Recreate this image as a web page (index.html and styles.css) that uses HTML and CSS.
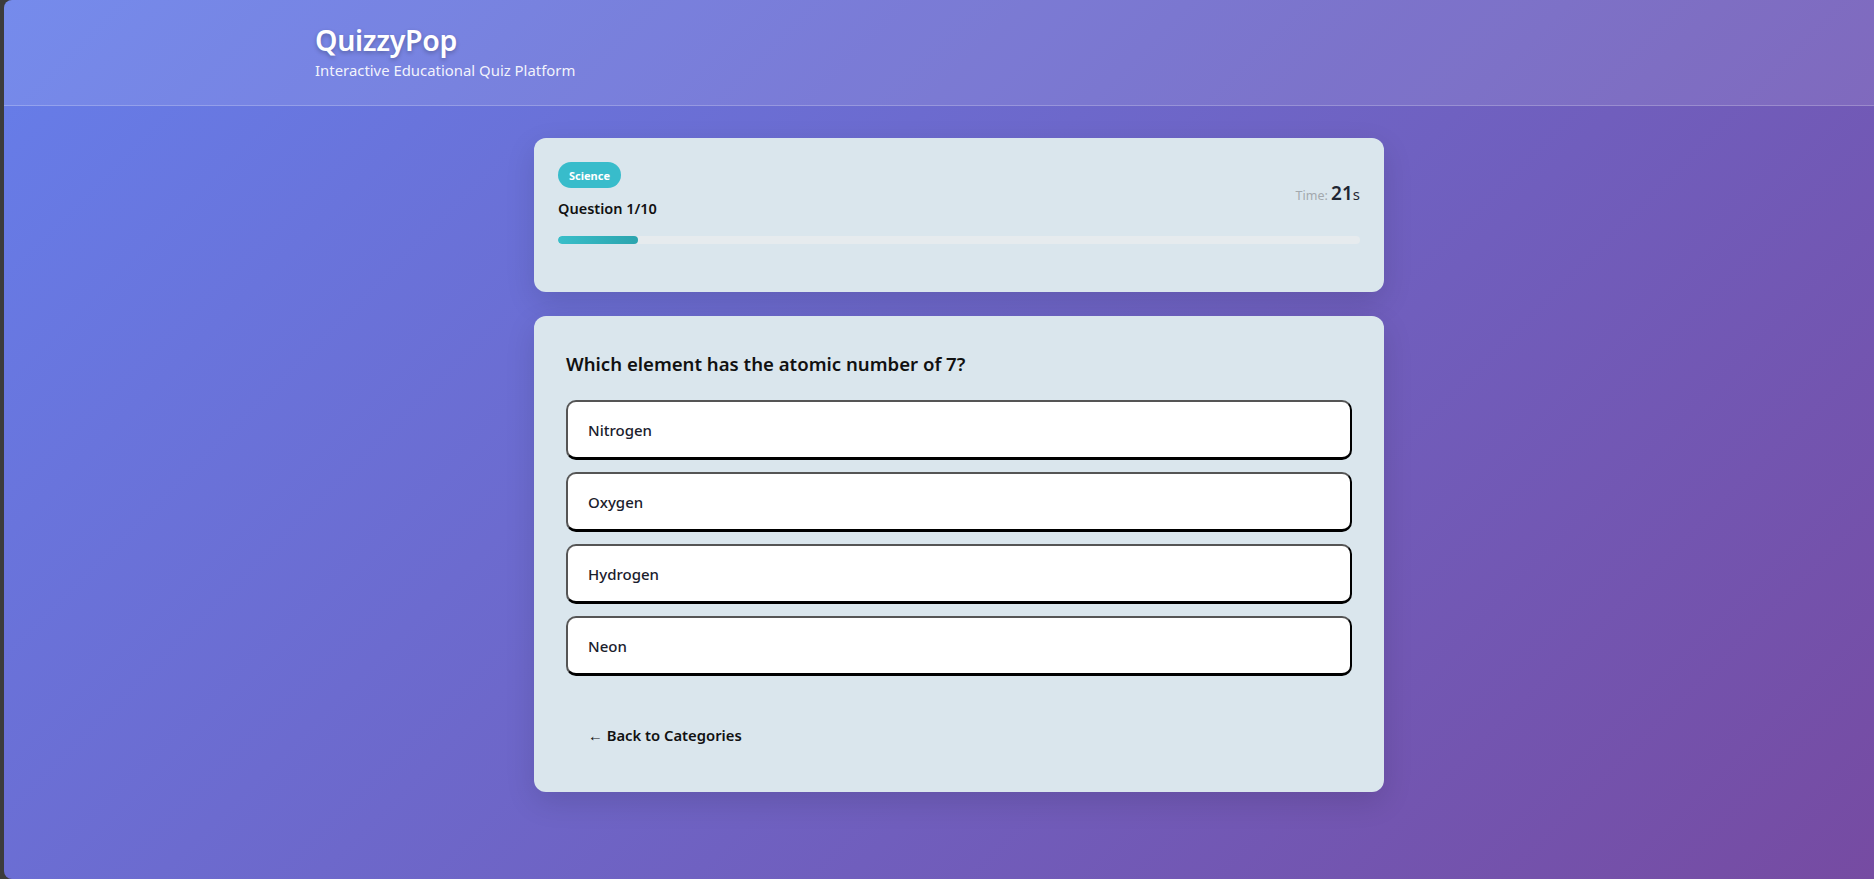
FILE: index.html
```html
<!DOCTYPE html>
<html lang="en">
<head>
<meta charset="utf-8">
<title>QuizzyPop</title>
<link rel="stylesheet" href="styles.css">
</head>
<body>
<div class="app">
  <header class="site-header">
    <div class="header-inner">
      <h1 class="brand">QuizzyPop</h1>
      <p class="tagline">Interactive Educational Quiz Platform</p>
    </div>
  </header>
  <main class="main">
    <section class="card status-card">
      <div class="status-row">
        <div class="status-left">
          <span class="badge">Science</span>
          <div class="q-count">Question 1/10</div>
        </div>
        <div class="timer"><span class="timer-label">Time:</span> <span class="timer-value">21</span><span class="timer-unit">s</span></div>
      </div>
      <div class="progress"><div class="progress-fill" style="width:10%"></div></div>
    </section>
    <section class="card question-card">
      <h2 class="question">Which element has the atomic number of 7?</h2>
      <div class="options">
        <button class="option">Nitrogen</button>
        <button class="option">Oxygen</button>
        <button class="option">Hydrogen</button>
        <button class="option">Neon</button>
      </div>
      <button class="back-btn">← Back to Categories</button>
    </section>
  </main>
</div>
</body>
</html>
```

FILE: styles.css
```css
* { box-sizing: border-box; }
html, body { margin: 0; padding: 0; height: 100%; }
body {
  background: #3c3c3c;
  font-family: "Noto Sans", "Open Sans", sans-serif;
  color: #1a1a1a;
  padding-left: 4px;
}
.app {
  height: 879px;
  overflow: hidden;
  border-radius: 8px 0 0 8px;
  background: linear-gradient(135deg, #667eea 0%, #764ba2 100%);
}
.site-header {
  background: rgba(255, 255, 255, 0.1);
  border-bottom: 1px solid rgba(255, 255, 255, 0.22);
  height: 106px;
  padding: 22px 0 0 311px;
}
.brand {
  margin: 0;
  color: #fff;
  font-size: 28.5px;
  font-weight: 600;
  line-height: 36px;
  letter-spacing: -0.3px;
  text-shadow: 0 2px 4px rgba(0, 0, 0, 0.25);
}
.tagline {
  margin: 1px 0 0;
  color: rgba(255, 255, 255, 0.92);
  font-size: 14.9px;
  line-height: 22px;
}
.main {
  width: 850px;
  margin: 32px 0 0 530px;
}
.card {
  background: #dae6ed;
  border-radius: 12px;
  box-shadow: 0 10px 30px rgba(0, 0, 0, 0.12);
}
.status-card {
  padding: 24px 24px 48px;
}
.status-row {
  display: flex;
  justify-content: space-between;
  align-items: center;
}
.status-left {
  display: flex;
  flex-direction: column;
  align-items: flex-start;
  gap: 8px;
}
.badge {
  display: inline-flex;
  align-items: center;
  height: 26px;
  padding: 0 11px;
  border-radius: 13px;
  background: #38bccb;
  color: #fff;
  font-size: 11px;
  font-weight: 700;
}
.q-count {
  font-size: 14.5px;
  font-weight: 600;
  line-height: 24px;
  color: #111;
}
.timer {
  color: #a3a9ae;
  font-size: 12.5px;
  margin-top: 3px;
}
.timer-value {
  color: #1f2733;
  font-size: 19px;
  font-weight: 600;
}
.timer-unit {
  color: #1f2733;
  font-size: 15px;
}
.progress {
  margin-top: 16px;
  height: 8px;
  border-radius: 4px;
  background: #e6ebee;
  overflow: hidden;
}
.progress-fill {
  height: 100%;
  border-radius: 4px;
  background: linear-gradient(90deg, #38bec9, #2ba4ae);
}
.question-card {
  margin-top: 24px;
  padding: 34px 32px 34px;
}
.question {
  margin: 0 0 23px;
  font-size: 18.6px;
  font-weight: 600;
  line-height: 27px;
  color: #111;
}
.options {
  display: flex;
  flex-direction: column;
  gap: 12px;
}
.option {
  display: block;
  width: 100%;
  height: 60px;
  padding: 0 20px;
  text-align: left;
  background: #fff;
  border: 2px solid;
  border-color: #555 #000 #000 #555;
  border-bottom-width: 3px;
  border-radius: 10px;
  font-family: inherit;
  font-size: 15px;
  font-weight: 500;
  color: #1a202c;
}
.back-btn {
  display: block;
  margin-top: 36px;
  height: 46px;
  padding: 0 22px;
  background: transparent;
  border: none;
  font-family: inherit;
  font-size: 14.8px;
  font-weight: 600;
  color: #111;
}
```
